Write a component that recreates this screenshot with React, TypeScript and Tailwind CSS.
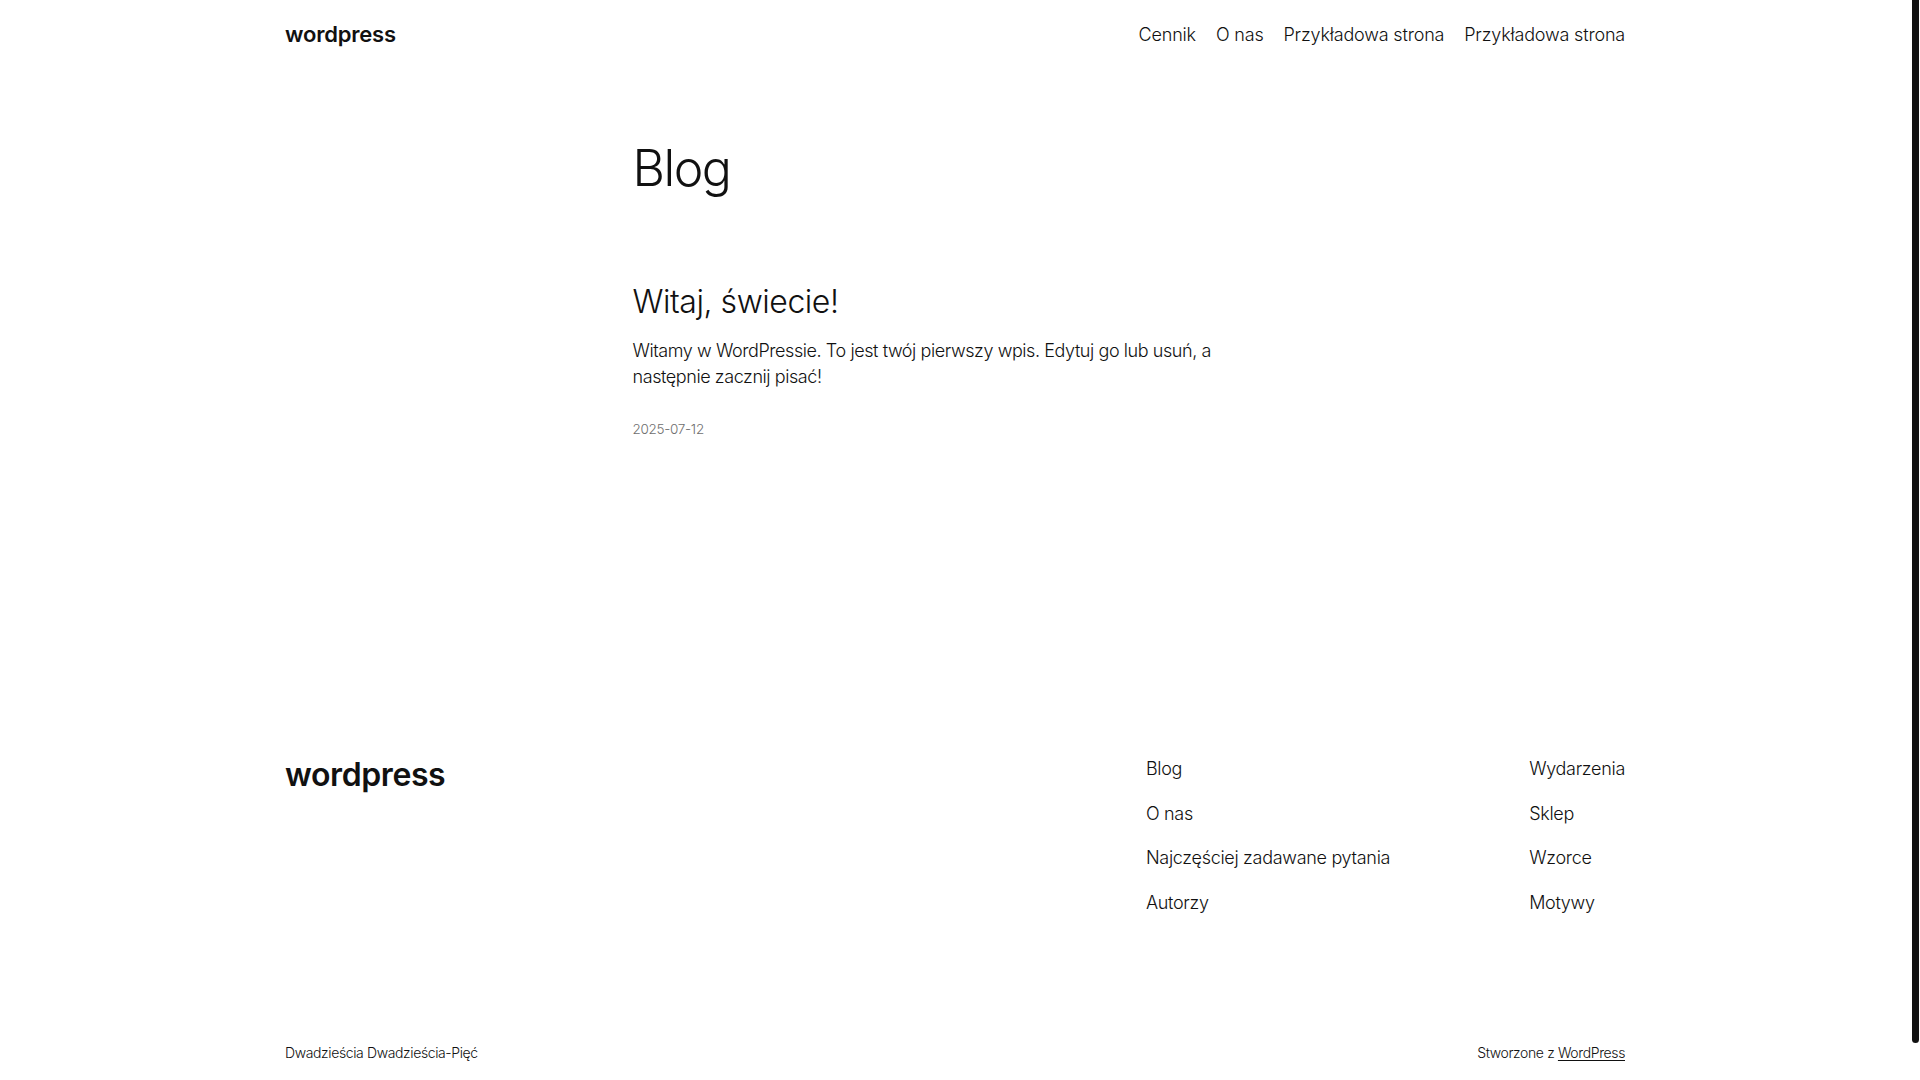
import React from "react"

// Simple WordPress-like blog page (Twenty Twenty-Five look)

const navItems = ["Cennik", "O nas", "Przykładowa strona", "Przykładowa strona"]
const footerCol1 = ["Blog", "O nas", "Najczęściej zadawane pytania", "Autorzy"]
const footerCol2 = ["Wydarzenia", "Sklep", "Wzorce", "Motywy"]

const font = { fontFamily: "Inter, 'Noto Sans', sans-serif" }

function Header() {
  return (
    <header className="mx-auto flex h-[68px] w-[1340px] items-center justify-between">
      <a className="text-[22px] font-semibold tracking-[-0.2px] text-[#111111]">wordpress</a>
      <nav className="flex items-center gap-5">
        {navItems.map((item, i) => (
          <a key={i} className="text-[18px] font-light tracking-[-0.18px] text-[#111111]">
            {item}
          </a>
        ))}
      </nav>
    </header>
  )
}

function Post() {
  return (
    <article className="flex flex-col">
      <h2 className="text-[32px] font-light leading-[38px] tracking-[-0.45px] text-[#111111]">
        Witaj, świecie!
      </h2>
      <p className="mt-[17px] text-[18px] font-light leading-[25.5px] tracking-[-0.42px] text-[#111111]">
        Witamy w WordPressie. To jest twój pierwszy wpis. Edytuj go lub usuń, a następnie zacznij pisać!
      </p>
      <time className="mt-[31px] text-[13.5px] font-light leading-[19px] tracking-[-0.3px] text-[#6e6e6e]">
        2025-07-12
      </time>
    </article>
  )
}

function Footer() {
  return (
    <footer className="mx-auto mt-[317px] flex w-[1340px] flex-col">
      <div className="flex items-start justify-between">
        <a className="text-[32px] font-semibold leading-[38px] tracking-[-0.4px] text-[#111111]">wordpress</a>
        <div className="flex gap-[139px]">
          <div className="flex flex-col gap-[19.5px]">
            {footerCol1.map((item) => (
              <a key={item} className="text-[18px] font-light leading-[25px] tracking-[-0.3px] text-[#111111]">
                {item}
              </a>
            ))}
          </div>
          <div className="flex flex-col gap-[19.5px]">
            {footerCol2.map((item) => (
              <a key={item} className="text-[18px] font-light leading-[25px] tracking-[-0.3px] text-[#111111]">
                {item}
              </a>
            ))}
          </div>
        </div>
      </div>
      <div className="mt-[128px] flex items-center justify-between text-[14px] font-light leading-[20px] tracking-[-0.38px] text-[#111111]">
        <p>Dwadzieścia Dwadzieścia-Pięć</p>
        <p>
          Stworzone z <a className="underline underline-offset-2">WordPress</a>
        </p>
      </div>
    </footer>
  )
}

export default function App() {
  return (
    <div className="flex h-screen w-full overflow-hidden bg-white" style={font}>
      <div className="flex w-[1910px] flex-col">
        <Header />
        <main className="mx-auto mt-[71px] flex w-[645px] flex-col">
          <h1 className="text-[50px] font-light leading-[58px] tracking-[-1.5px] text-[#111111]">Blog</h1>
          <div className="mt-[86px]">
            <Post />
          </div>
        </main>
        <Footer />
      </div>
      {/* scrollbar strip */}
      <div className="w-[10px] bg-white">
        <div className="ml-[2px] h-[1043px] w-[7px] rounded-b-full bg-[#111111]" />
      </div>
    </div>
  )
}
